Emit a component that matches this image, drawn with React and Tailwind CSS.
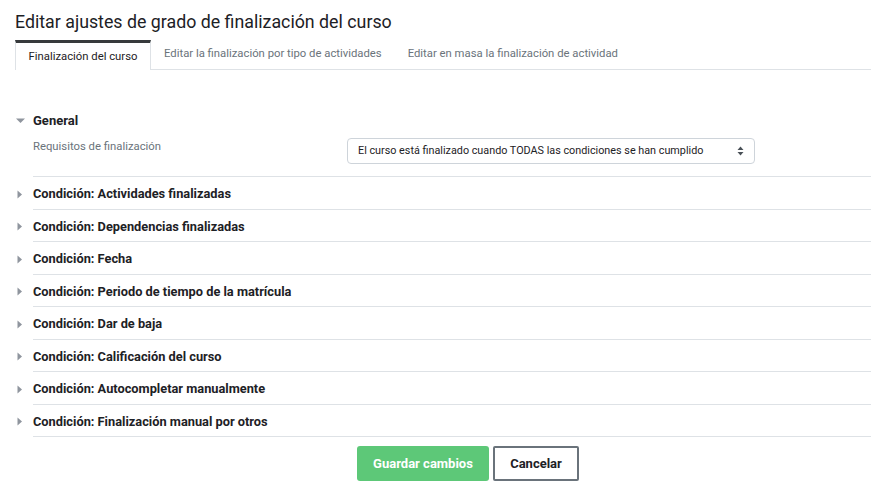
const conditions = [
  'Condición: Actividades finalizadas',
  'Condición: Dependencias finalizadas',
  'Condición: Fecha',
  'Condición: Periodo de tiempo de la matrícula',
  'Condición: Dar de baja',
  'Condición: Calificación del curso',
  'Condición: Autocompletar manualmente',
  'Condición: Finalización manual por otros',
];

function CaretRight() {
  return (
    <svg width="6" height="9" viewBox="0 0 6 9" className="shrink-0">
      <path d="M0.5 0.5 L5 4.5 L0.5 8.5 Z" fill="#8f959e" />
    </svg>
  );
}

function CaretDown() {
  return (
    <svg width="9" height="6" viewBox="0 0 9 6" className="shrink-0">
      <path d="M0 0.5 L9 0.5 L4.5 5 Z" fill="#8f959e" />
    </svg>
  );
}

export default function App() {
  return (
    <div
      className="w-[871px] h-[494px] bg-white text-[#1d2125] overflow-hidden pl-[15px]"
      style={{ fontFamily: 'Roboto, "Liberation Sans", sans-serif' }}
    >
      <h2 className="pt-[9px] text-[17.8px] leading-[26px] text-[#1d2125]">
        Editar ajustes de grado de finalización del curso
      </h2>

      {/* Tabs */}
      <div className="mt-[5px] flex border-b border-[#dee2e6] h-[30px]">
        <div className="w-[136px] h-[30px] border-t-[3px] border-[#373a3c] border-x border-x-[#dee2e6] bg-white flex items-center justify-center text-[11.3px] text-[#1d2125] pt-[1px]">
          Finalización del curso
        </div>
        <div className="px-[13px] flex items-center text-[11.3px] text-[#6a737b]">
          Editar la finalización por tipo de actividades
        </div>
        <div className="px-[13px] flex items-center text-[11.3px] text-[#6a737b]">
          Editar en masa la finalización de actividad
        </div>
      </div>

      {/* General */}
      <div className="mt-[41px]">
        <div className="flex items-center h-[20px]">
          <div className="w-[18px] flex pl-[1px]">
            <CaretDown />
          </div>
          <span className="text-[13px] font-bold">General</span>
        </div>
        <div className="flex ml-[18px] mt-[7px] border-b border-[#dee2e6] pb-[12px]">
          <div className="w-[314px] text-[11.3px] text-[#6a737b] pt-[1px]">
            Requisitos de finalización
          </div>
          <div className="w-[408px] h-[26px] border border-[#ced4da] rounded-[4px] flex items-center justify-between pl-[10px] pr-[10px] text-[10.8px] text-[#1d2125]">
            <span>El curso está finalizado cuando TODAS las condiciones se han cumplido</span>
            <svg width="7" height="10" viewBox="0 0 7 10">
              <path d="M0.5 4 L3.5 0.5 L6.5 4 Z M0.5 6 L3.5 9.5 L6.5 6 Z" fill="#495057" />
            </svg>
          </div>
        </div>
      </div>

      {/* Conditions */}
      <div>
        {conditions.map((c) => (
          <div key={c} className="flex items-center h-[32.5px]">
            <div className="w-[18px] flex pl-[2px] pt-[2px]">
              <CaretRight />
            </div>
            <div className="flex-1 h-full flex items-center border-b border-[#dee2e6] pt-[2px]">
              <span className="text-[12.8px] font-bold">{c}</span>
            </div>
          </div>
        ))}
      </div>

      {/* Buttons */}
      <div className="flex gap-[4px] ml-[342px] mt-[9px]">
        <button className="w-[132px] h-[35px] rounded-[3px] bg-[#5dc878] text-white text-[13px] font-bold">
          Guardar cambios
        </button>
        <button className="w-[86px] h-[35px] rounded-[2px] border-2 border-[#6a737b] bg-white text-[#1d2125] text-[13px] font-bold">
          Cancelar
        </button>
      </div>
    </div>
  );
}
